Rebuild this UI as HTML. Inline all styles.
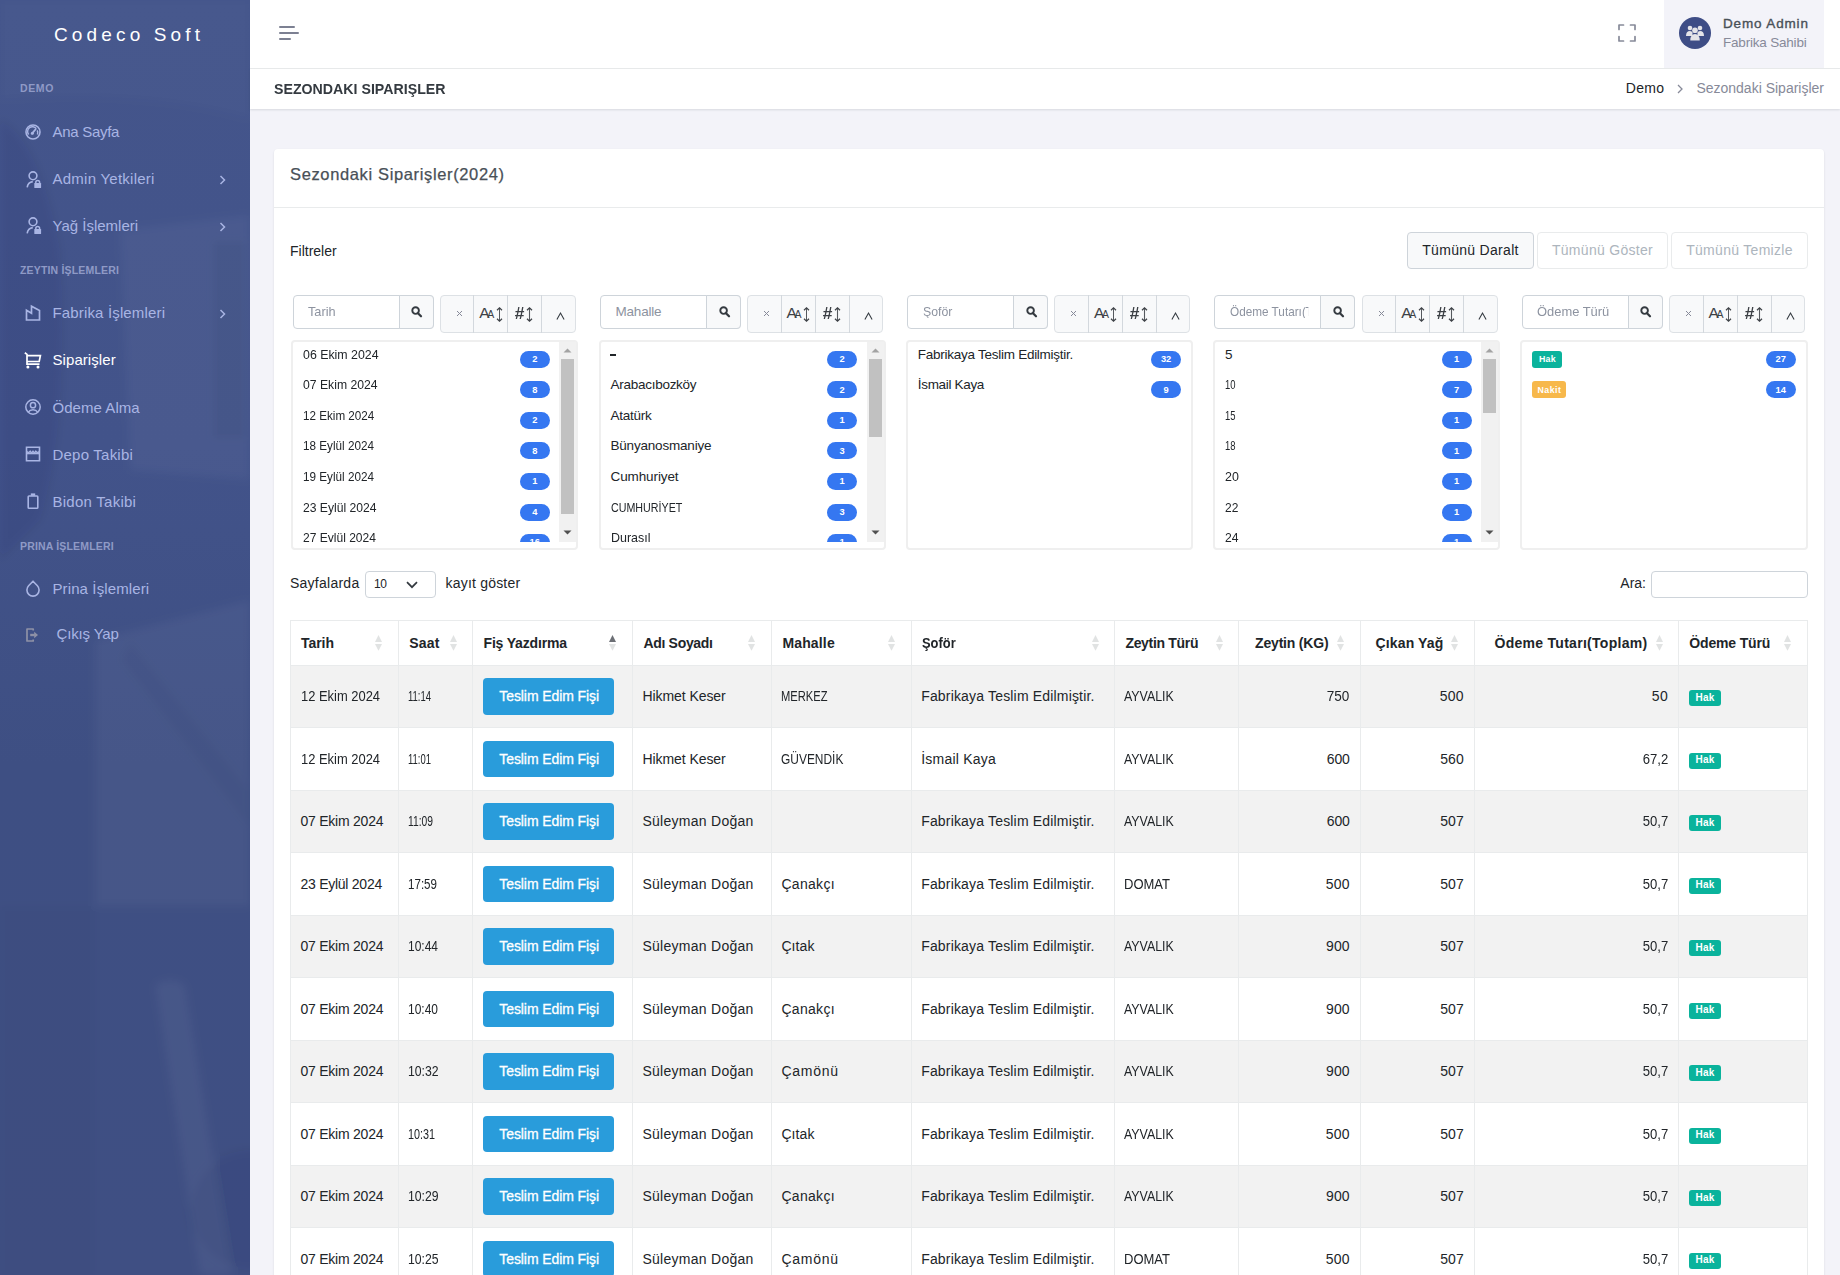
<!DOCTYPE html><html><head><meta charset="utf-8"><title>Sezondaki Siparişler</title><style>
*{box-sizing:border-box;margin:0;padding:0}
html,body{width:1840px;height:1275px;overflow:hidden;background:#f3f3f9;font-family:"Liberation Sans",sans-serif}
.t{position:absolute;white-space:nowrap}
.r{position:absolute}
svg{position:absolute;overflow:visible}
</style></head><body><div class="r" style="left:0px;top:0px;width:250px;height:1275px;background:linear-gradient(180deg,#44558b 0%,#42538a 35%,#3e4f83 60%,#3f4f83 100%);"></div>
<svg style="left:0;top:0;overflow:hidden" width="250" height="1275" viewBox="0 0 250 1275"><defs><filter id="bl" x="-10%" y="-10%" width="120%" height="120%"><feGaussianBlur stdDeviation="4"/></filter></defs><g filter="url(#bl)">
<path d="M0 120Q40 140 60 250Q70 420 40 520L0 560Z" fill="rgba(20,30,70,0.07)"/>
<path d="M120 230L250 215V480L130 470Z" fill="rgba(255,255,255,0.035)"/>
<path d="M212 240H246V440H212Z" fill="rgba(20,30,70,0.06)"/>
<path d="M95 640L250 600V906L95 906Z" fill="rgba(255,255,255,0.04)"/>
<path d="M130 640L250 790V830L120 660Z" fill="rgba(20,30,70,0.05)"/>
<path d="M0 906H95V1275H0Z" fill="rgba(20,30,70,0.02)"/>
<path d="M155 985Q170 975 185 985L232 1275H200Z" fill="rgba(255,255,255,0.045)"/>
<circle cx="250" cy="1210" r="60" fill="rgba(20,30,70,0.06)"/>
<path d="M0 0H250V120Q150 90 0 100Z" fill="rgba(255,255,255,0.015)"/></g>
</svg>
<div class="t " style="top:25.17px;font-size:19px;line-height:19px;color:#ffffff;letter-spacing:4.145px;left:54px;">Codeco Soft</div>
<div class="t " style="top:83.11px;font-size:10.5px;line-height:10.5px;color:#8f9ac6;font-weight:700;letter-spacing:0.6px;left:20px;">DEMO</div>
<div class="t " style="top:265.11px;font-size:10.5px;line-height:10.5px;color:#8f9ac6;font-weight:700;letter-spacing:0.17px;left:20px;">ZEYTIN İŞLEMLERI</div>
<div class="t " style="top:540.91px;font-size:10.5px;line-height:10.5px;color:#8f9ac6;font-weight:700;letter-spacing:0.17px;left:20px;">PRINA İŞLEMLERI</div>
<div class="t " style="top:124.20px;font-size:15px;line-height:15px;color:#a9b5e4;letter-spacing:-0.287px;left:52.5px;">Ana Sayfa</div>
<svg style="left:25px;top:124.0px" width="16" height="16" viewBox="0 0 16 16"><circle cx="8" cy="8" r="7" fill="none" stroke="#a9b5e4" stroke-width="1.6"/><path d="M3.6 10.5A4.7 4.7 0 0 1 11.3 4.6" fill="none" stroke="#a9b5e4" stroke-width="1.4"/><path d="M12.2 6.4A4.7 4.7 0 0 1 12.4 10.5" fill="none" stroke="#a9b5e4" stroke-width="1.4"/><path d="M7 9.6L10.6 5.2" stroke="#a9b5e4" stroke-width="1.8" stroke-linecap="round"/><circle cx="7.4" cy="9.2" r="1.5" fill="#a9b5e4"/></svg>
<div class="t " style="top:171.05px;font-size:15px;line-height:15px;color:#a9b5e4;letter-spacing:0.25px;left:52.5px;">Admin Yetkileri</div>
<svg style="left:26px;top:170.55px" width="16" height="17" viewBox="0 0 16 17"><circle cx="7" cy="4.8" r="3.9" fill="none" stroke="#a9b5e4" stroke-width="1.6"/><path d="M1.2 16.3A6.5 6.5 0 0 1 6.8 10.6" fill="none" stroke="#a9b5e4" stroke-width="1.6"/><rect x="8.3" y="12" width="6.8" height="5" rx="0.6" fill="#a9b5e4"/><path d="M9.8 12.3V11.3A1.9 1.9 0 0 1 13.6 11.3V12.3" fill="none" stroke="#a9b5e4" stroke-width="1.5"/></svg>
<svg style="left:219px;top:174.75px" width="8" height="10" viewBox="0 0 8 10"><path d="M1.5 1L5.5 5L1.5 9" fill="none" stroke="#a9b5e4" stroke-width="1.5"/></svg>
<div class="t " style="top:217.90px;font-size:15px;line-height:15px;color:#a9b5e4;left:52.5px;">Yağ İşlemleri</div>
<svg style="left:26px;top:217.4px" width="16" height="17" viewBox="0 0 16 17"><circle cx="7" cy="4.8" r="3.9" fill="none" stroke="#a9b5e4" stroke-width="1.6"/><path d="M1.2 16.3A6.5 6.5 0 0 1 6.8 10.6" fill="none" stroke="#a9b5e4" stroke-width="1.6"/><rect x="8.3" y="12" width="6.8" height="5" rx="0.6" fill="#a9b5e4"/><path d="M9.8 12.3V11.3A1.9 1.9 0 0 1 13.6 11.3V12.3" fill="none" stroke="#a9b5e4" stroke-width="1.5"/></svg>
<svg style="left:219px;top:221.6px" width="8" height="10" viewBox="0 0 8 10"><path d="M1.5 1L5.5 5L1.5 9" fill="none" stroke="#a9b5e4" stroke-width="1.5"/></svg>
<div class="t " style="top:304.80px;font-size:15px;line-height:15px;color:#a9b5e4;letter-spacing:0.153px;left:52.5px;">Fabrika İşlemleri</div>
<svg style="left:25px;top:304.5px" width="16" height="16" viewBox="0 0 16 16"><path d="M1.5 15V5.2L6.5 8.2V1.2L14.5 5.4V15Z" fill="none" stroke="#a9b5e4" stroke-width="1.7" stroke-linejoin="miter"/></svg>
<svg style="left:219px;top:308.5px" width="8" height="10" viewBox="0 0 8 10"><path d="M1.5 1L5.5 5L1.5 9" fill="none" stroke="#a9b5e4" stroke-width="1.5"/></svg>
<div class="t " style="top:352.30px;font-size:15px;line-height:15px;color:#ffffff;letter-spacing:0.067px;left:52.5px;">Siparişler</div>
<svg style="left:24px;top:352.4px" width="18" height="17" viewBox="0 0 18 17"><path d="M0.8 0.8L3 2.4V12.2H15.5" fill="none" stroke="#ffffff" stroke-width="1.7"/><path d="M3 3.6H16.4L15.2 9.5H3" fill="none" stroke="#ffffff" stroke-width="1.7"/><circle cx="3.9" cy="15" r="1.5" fill="#ffffff"/><circle cx="14" cy="15" r="1.5" fill="#ffffff"/></svg>
<div class="t " style="top:399.70px;font-size:15px;line-height:15px;color:#a9b5e4;letter-spacing:0.056px;left:52.5px;">Ödeme Alma</div>
<svg style="left:25px;top:399.0px" width="16" height="16" viewBox="0 0 16 16"><circle cx="8" cy="8" r="7.2" fill="none" stroke="#a9b5e4" stroke-width="1.5"/><circle cx="8" cy="6.2" r="2.6" fill="none" stroke="#a9b5e4" stroke-width="1.5"/><path d="M3.3 13.2A5.6 5.6 0 0 1 12.7 13.2" fill="none" stroke="#a9b5e4" stroke-width="1.5"/></svg>
<div class="t " style="top:446.70px;font-size:15px;line-height:15px;color:#a9b5e4;letter-spacing:0.22px;left:52.5px;">Depo Takibi</div>
<svg style="left:25px;top:445.9px" width="16" height="16" viewBox="0 0 16 16"><path d="M1.5 1.2H14.5V14.8H1.5Z" fill="none" stroke="#a9b5e4" stroke-width="1.6"/><path d="M1.5 7.5H14.5" stroke="#a9b5e4" stroke-width="1.6"/><path d="M1.5 5.3Q3.3 7.6 5.2 5.3Q6.6 7.6 8 5.3Q9.4 7.6 10.8 5.3Q12.7 7.6 14.5 5.3" fill="none" stroke="#a9b5e4" stroke-width="1.4"/></svg>
<div class="t " style="top:493.80px;font-size:15px;line-height:15px;color:#a9b5e4;letter-spacing:0.255px;left:52.5px;">Bidon Takibi</div>
<svg style="left:27px;top:492.6px" width="12" height="16" viewBox="0 0 12 16"><rect x="1.2" y="3" width="9.6" height="12.2" rx="0.8" fill="none" stroke="#a9b5e4" stroke-width="1.6"/><rect x="3.8" y="0.4" width="4.4" height="2.4" fill="#a9b5e4"/></svg>
<div class="t " style="top:581.00px;font-size:15px;line-height:15px;color:#a9b5e4;letter-spacing:0.111px;left:52.5px;">Prina İşlemleri</div>
<svg style="left:25px;top:579.6px" width="16" height="17" viewBox="0 0 16 17"><path d="M8 1.2L12.4 5.8A6.1 6.1 0 1 1 3.6 5.8Z" fill="none" stroke="#a9b5e4" stroke-width="1.6" stroke-linejoin="round"/></svg>
<div class="t " style="top:626.30px;font-size:15px;line-height:15px;color:#a9b5e4;letter-spacing:-0.156px;left:56.5px;">Çıkış Yap</div>
<svg style="left:26px;top:628px" width="13" height="14" viewBox="0 0 13 14"><path d="M7.2 2.6V1H1V13H7.2V11.4" fill="none" stroke="#8e91a6" stroke-width="1.7" stroke-linejoin="round"/><path d="M4.2 7H8.8" stroke="#8e91a6" stroke-width="2.4"/><path d="M8.2 3.8L12 7L8.2 10.2Z" fill="#8e91a6"/></svg>
<div class="r" style="left:250px;top:0px;width:1590px;height:68px;background:#fff;"></div>
<div class="r" style="left:250px;top:68px;width:1590px;height:1px;background:#e9ebec;"></div>
<div class="r" style="left:279px;top:26px;width:16px;height:2px;background:#7c8092;border-radius:1px;"></div>
<div class="r" style="left:279px;top:32px;width:20px;height:2px;background:#7c8092;border-radius:1px;"></div>
<div class="r" style="left:279px;top:38px;width:12px;height:2px;background:#7c8092;border-radius:1px;"></div>
<svg style="left:1618px;top:23.8px" width="18" height="18" viewBox="0 0 18 18"><path d="M1 5.5V1H5.5M12.5 1H17V5.5M17 12.5V17H12.5M5.5 17H1V12.5" fill="none" stroke="#878a99" stroke-width="1.7" stroke-linejoin="round" stroke-linecap="round"/></svg>
<div class="r" style="left:1664px;top:0px;width:160px;height:68px;background:#f3f3f9;"></div>
<div class="r" style="left:1679px;top:17px;width:32px;height:32px;border-radius:50%;background:#3e4d86;"></div>
<svg style="left:1685px;top:24px" width="20" height="18" viewBox="0 0 20 18"><circle cx="5" cy="4" r="2.3" fill="#e4e4e8"/><circle cx="15" cy="4" r="2.3" fill="#e4e4e8"/><path d="M1 12Q1 7 5 7Q7 7 7.5 8.5V12Z" fill="#e4e4e8"/><path d="M19 12Q19 7 15 7Q13 7 12.5 8.5V12Z" fill="#e4e4e8"/><circle cx="10" cy="6.2" r="2.8" fill="#e4e4e8"/><path d="M5.3 16.5Q5.3 10 10 10Q14.7 10 14.7 16.5Z" fill="#e4e4e8"/></svg>
<div class="t " style="top:16.57px;font-size:13.5px;line-height:13.5px;color:#495057;letter-spacing:0.856px;left:1723px;-webkit-text-stroke:0.35px #495057;">Demo Admin</div>
<div class="t " style="top:35.57px;font-size:13.5px;line-height:13.5px;color:#878a99;letter-spacing:-0.2px;left:1723px;">Fabrika Sahibi</div>
<div class="r" style="left:250px;top:69px;width:1590px;height:40px;background:#fff;box-shadow:0 1px 2px rgba(56,65,74,0.15);"></div>
<div class="t " style="top:81.30px;font-size:15px;line-height:15px;color:#343a40;font-weight:700;transform:scaleX(0.9454);transform-origin:left center;left:274px;">SEZONDAKI SIPARIŞLER</div>
<div class="t " style="top:81.35px;font-size:14px;line-height:14px;color:#878a99;right:16px;">Sezondaki Siparişler</div>
<svg style="left:1677px;top:84px" width="7" height="10" viewBox="0 0 7 10"><path d="M1 1L5 5L1 9" fill="none" stroke="#878a99" stroke-width="1.3"/></svg>
<div class="t " style="top:81.35px;font-size:14px;line-height:14px;color:#212529;letter-spacing:0.3px;right:175.70000000000005px;">Demo</div>
<div class="r" style="left:274px;top:149px;width:1550px;height:1200px;background:#fff;border-radius:4px;box-shadow:0 1px 2px rgba(56,65,74,0.15);"></div>
<div class="t " style="top:166.33px;font-size:16.5px;line-height:16.5px;color:#495057;letter-spacing:0.636px;left:290px;-webkit-text-stroke:0.25px #495057;">Sezondaki Siparişler(2024)</div>
<div class="r" style="left:274px;top:207px;width:1550px;height:1px;background:#e9ebec;"></div>
<div class="t " style="top:244.35px;font-size:14px;line-height:14px;color:#212529;left:290px;">Filtreler</div>
<div class="r" style="left:1407px;top:232px;width:127px;height:37px;background:#f8f9fa;border:1px solid #ced4da;border-radius:4px;"></div>
<div class="t " style="top:243.25px;font-size:14px;line-height:14px;color:#212529;letter-spacing:0.3px;left:1170.5px;width:600px;text-align:center;">Tümünü Daralt</div>
<div class="r" style="left:1537px;top:232px;width:131px;height:37px;background:#fff;border:1px solid #e9ebec;border-radius:4px;"></div>
<div class="t " style="top:243.25px;font-size:14px;line-height:14px;color:#adb5bd;letter-spacing:0.3px;left:1302.5px;width:600px;text-align:center;">Tümünü Göster</div>
<div class="r" style="left:1671px;top:232px;width:137px;height:37px;background:#fff;border:1px solid #e9ebec;border-radius:4px;"></div>
<div class="t " style="top:243.25px;font-size:14px;line-height:14px;color:#adb5bd;letter-spacing:0.3px;left:1439.5px;width:600px;text-align:center;">Tümünü Temizle</div>
<div class="r" style="left:292.5px;top:295px;width:141px;height:34px;background:#fff;border:1px solid #ced4da;border-radius:4px;"></div>
<div class="r" style="left:398.5px;top:295px;width:35px;height:34px;background:#f8f9fa;border:1px solid #ced4da;border-radius:0 4px 4px 0;"></div>
<div class="t" style="left:308.2px;top:304.87px;font-size:13.5px;line-height:13.5px;color:#8d93a0;width:90px;overflow:hidden;transform:scaleX(0.9436);transform-origin:left center;">Tarih</div>
<svg style="left:411.2px;top:306px" width="11" height="12" viewBox="0 0 11 12"><circle cx="4.6" cy="4.6" r="3.3" fill="none" stroke="#343a40" stroke-width="1.9"/><path d="M7 7.2L10 10.3" stroke="#343a40" stroke-width="2.2" stroke-linecap="round"/></svg>
<div class="r" style="left:439.8px;top:295px;width:136px;height:38px;background:#f8f9fa;border:1px solid #dde1e5;border-radius:4px;"></div>
<div class="r" style="left:473.3px;top:295px;width:1px;height:38px;background:#d3d8dd;"></div>
<div class="r" style="left:507.3px;top:295px;width:1px;height:38px;background:#d3d8dd;"></div>
<div class="r" style="left:541.3px;top:295px;width:1px;height:38px;background:#d3d8dd;"></div>
<svg style="left:455.8px;top:310px" width="7" height="7" viewBox="0 0 7 7"><path d="M1 1L6 6M6 1L1 6" stroke="#878a99" stroke-width="1"/></svg>
<div class="t " style="top:304.68px;font-size:15.5px;line-height:15.5px;color:#3d4146;letter-spacing:-1.5px;left:479.3px;">A</div>
<div class="t " style="top:308.91px;font-size:10.5px;line-height:10.5px;color:#3d4146;left:487.3px;">A</div>
<svg style="left:495.8px;top:306.5px" width="7" height="15" viewBox="0 0 7 15"><path d="M3.5 1V14" stroke="#55595e" stroke-width="1"/><path d="M1 3.2L3.5 0.8L6 3.2M1 11.8L3.5 14.2L6 11.8" fill="none" stroke="#3d4146" stroke-width="1.2"/></svg>
<div class="t " style="top:304.63px;font-size:16.5px;line-height:16.5px;color:#3d4146;font-weight:700;left:515.3px;transform:scaleX(1.05);">#</div>
<svg style="left:526.3px;top:307px" width="7" height="15" viewBox="0 0 7 15"><path d="M3.5 1V14" stroke="#55595e" stroke-width="1.1"/><path d="M1 3.2L3.5 0.8L6 3.2M1 11.8L3.5 14.2L6 11.8" fill="none" stroke="#3d4146" stroke-width="1.3"/></svg>
<svg style="left:556.3px;top:311.5px" width="9" height="8" viewBox="0 0 9 8"><path d="M0.9 7.4L4.5 1L8.1 7.4" fill="none" stroke="#343a40" stroke-width="1.1"/></svg>
<div class="r" style="left:291.2px;top:340px;width:287.3px;height:210px;background:#fff;border:2px solid #efefef;border-radius:4px;"></div>
<div class="r" style="left:293.20px;top:342px;width:283.30px;height:200px;overflow:hidden;">
<div class="t" style="left:10px;top:5.77px;font-size:13.5px;line-height:13.5px;color:#212529;transform:scaleX(0.9158);transform-origin:left center;">06 Ekim 2024</div>
<div class="r" style="left:226.60px;top:8.80px;width:30px;height:17px;background:#3577f1;border-radius:9px;"></div>
<div class="t" style="left:226.60px;width:30px;text-align:center;top:13.10px;font-size:9.3px;line-height:9.3px;color:#fff;font-weight:700;">2</div>
<div class="t" style="left:10px;top:36.32px;font-size:13.5px;line-height:13.5px;color:#212529;transform:scaleX(0.9037);transform-origin:left center;">07 Ekim 2024</div>
<div class="r" style="left:226.60px;top:39.35px;width:30px;height:17px;background:#3577f1;border-radius:9px;"></div>
<div class="t" style="left:226.60px;width:30px;text-align:center;top:43.65px;font-size:9.3px;line-height:9.3px;color:#fff;font-weight:700;">8</div>
<div class="t" style="left:10px;top:66.87px;font-size:13.5px;line-height:13.5px;color:#212529;transform:scaleX(0.8637);transform-origin:left center;">12 Ekim 2024</div>
<div class="r" style="left:226.60px;top:69.90px;width:30px;height:17px;background:#3577f1;border-radius:9px;"></div>
<div class="t" style="left:226.60px;width:30px;text-align:center;top:74.20px;font-size:9.3px;line-height:9.3px;color:#fff;font-weight:700;">2</div>
<div class="t" style="left:10px;top:97.42px;font-size:13.5px;line-height:13.5px;color:#212529;transform:scaleX(0.8667);transform-origin:left center;">18 Eylül 2024</div>
<div class="r" style="left:226.60px;top:100.45px;width:30px;height:17px;background:#3577f1;border-radius:9px;"></div>
<div class="t" style="left:226.60px;width:30px;text-align:center;top:104.75px;font-size:9.3px;line-height:9.3px;color:#fff;font-weight:700;">8</div>
<div class="t" style="left:10px;top:127.97px;font-size:13.5px;line-height:13.5px;color:#212529;transform:scaleX(0.8667);transform-origin:left center;">19 Eylül 2024</div>
<div class="r" style="left:226.60px;top:131.00px;width:30px;height:17px;background:#3577f1;border-radius:9px;"></div>
<div class="t" style="left:226.60px;width:30px;text-align:center;top:135.30px;font-size:9.3px;line-height:9.3px;color:#fff;font-weight:700;">1</div>
<div class="t" style="left:10px;top:158.52px;font-size:13.5px;line-height:13.5px;color:#212529;transform:scaleX(0.8985);transform-origin:left center;">23 Eylül 2024</div>
<div class="r" style="left:226.60px;top:161.55px;width:30px;height:17px;background:#3577f1;border-radius:9px;"></div>
<div class="t" style="left:226.60px;width:30px;text-align:center;top:165.85px;font-size:9.3px;line-height:9.3px;color:#fff;font-weight:700;">4</div>
<div class="t" style="left:10px;top:189.07px;font-size:13.5px;line-height:13.5px;color:#212529;transform:scaleX(0.8912);transform-origin:left center;">27 Eylül 2024</div>
<div class="r" style="left:226.60px;top:192.10px;width:30px;height:17px;background:#3577f1;border-radius:9px;"></div>
<div class="t" style="left:226.60px;width:30px;text-align:center;top:196.40px;font-size:9.3px;line-height:9.3px;color:#fff;font-weight:700;">16</div>
<div class="r" style="left:266.30px;top:0;width:17px;height:200px;background:#f1f1f1;"></div>
<div class="r" style="left:268.30px;top:17px;width:13px;height:155px;background:#c1c1c1;"></div>
<svg style="left:270.30px;top:6px" width="9" height="5" viewBox="0 0 9 5"><path d="M0.5 4.5L4.5 0.5L8.5 4.5Z" fill="#a3a3a3"/></svg>
<svg style="left:270.30px;top:188px" width="9" height="5" viewBox="0 0 9 5"><path d="M0.5 0.5L4.5 4.5L8.5 0.5Z" fill="#505050"/></svg>
</div>
<div class="r" style="left:599.8px;top:295px;width:141px;height:34px;background:#fff;border:1px solid #ced4da;border-radius:4px;"></div>
<div class="r" style="left:705.8px;top:295px;width:35px;height:34px;background:#f8f9fa;border:1px solid #ced4da;border-radius:0 4px 4px 0;"></div>
<div class="t" style="left:615.5px;top:304.87px;font-size:13.5px;line-height:13.5px;color:#8d93a0;width:90px;overflow:hidden;letter-spacing:-0.2px;">Mahalle</div>
<svg style="left:718.5px;top:306px" width="11" height="12" viewBox="0 0 11 12"><circle cx="4.6" cy="4.6" r="3.3" fill="none" stroke="#343a40" stroke-width="1.9"/><path d="M7 7.2L10 10.3" stroke="#343a40" stroke-width="2.2" stroke-linecap="round"/></svg>
<div class="r" style="left:747.1px;top:295px;width:136px;height:38px;background:#f8f9fa;border:1px solid #dde1e5;border-radius:4px;"></div>
<div class="r" style="left:780.6px;top:295px;width:1px;height:38px;background:#d3d8dd;"></div>
<div class="r" style="left:814.6px;top:295px;width:1px;height:38px;background:#d3d8dd;"></div>
<div class="r" style="left:848.6px;top:295px;width:1px;height:38px;background:#d3d8dd;"></div>
<svg style="left:763.1px;top:310px" width="7" height="7" viewBox="0 0 7 7"><path d="M1 1L6 6M6 1L1 6" stroke="#878a99" stroke-width="1"/></svg>
<div class="t " style="top:304.68px;font-size:15.5px;line-height:15.5px;color:#3d4146;letter-spacing:-1.5px;left:786.6px;">A</div>
<div class="t " style="top:308.91px;font-size:10.5px;line-height:10.5px;color:#3d4146;left:794.6px;">A</div>
<svg style="left:803.1px;top:306.5px" width="7" height="15" viewBox="0 0 7 15"><path d="M3.5 1V14" stroke="#55595e" stroke-width="1"/><path d="M1 3.2L3.5 0.8L6 3.2M1 11.8L3.5 14.2L6 11.8" fill="none" stroke="#3d4146" stroke-width="1.2"/></svg>
<div class="t " style="top:304.63px;font-size:16.5px;line-height:16.5px;color:#3d4146;font-weight:700;left:822.6px;transform:scaleX(1.05);">#</div>
<svg style="left:833.6px;top:307px" width="7" height="15" viewBox="0 0 7 15"><path d="M3.5 1V14" stroke="#55595e" stroke-width="1.1"/><path d="M1 3.2L3.5 0.8L6 3.2M1 11.8L3.5 14.2L6 11.8" fill="none" stroke="#3d4146" stroke-width="1.3"/></svg>
<svg style="left:863.6px;top:311.5px" width="9" height="8" viewBox="0 0 9 8"><path d="M0.9 7.4L4.5 1L8.1 7.4" fill="none" stroke="#343a40" stroke-width="1.1"/></svg>
<div class="r" style="left:598.5px;top:340px;width:287.3px;height:210px;background:#fff;border:2px solid #efefef;border-radius:4px;"></div>
<div class="r" style="left:600.50px;top:342px;width:283.30px;height:200px;overflow:hidden;">
<div class="r" style="left:9.70px;top:12.20px;width:6px;height:2px;background:#212529;"></div>
<div class="r" style="left:226.60px;top:8.80px;width:30px;height:17px;background:#3577f1;border-radius:9px;"></div>
<div class="t" style="left:226.60px;width:30px;text-align:center;top:13.10px;font-size:9.3px;line-height:9.3px;color:#fff;font-weight:700;">2</div>
<div class="t" style="left:10px;top:36.32px;font-size:13.5px;line-height:13.5px;color:#212529;letter-spacing:-0.267px;">Arabacıbozköy</div>
<div class="r" style="left:226.60px;top:39.35px;width:30px;height:17px;background:#3577f1;border-radius:9px;"></div>
<div class="t" style="left:226.60px;width:30px;text-align:center;top:43.65px;font-size:9.3px;line-height:9.3px;color:#fff;font-weight:700;">2</div>
<div class="t" style="left:10px;top:66.87px;font-size:13.5px;line-height:13.5px;color:#212529;letter-spacing:-0.25px;">Atatürk</div>
<div class="r" style="left:226.60px;top:69.90px;width:30px;height:17px;background:#3577f1;border-radius:9px;"></div>
<div class="t" style="left:226.60px;width:30px;text-align:center;top:74.20px;font-size:9.3px;line-height:9.3px;color:#fff;font-weight:700;">1</div>
<div class="t" style="left:10px;top:97.42px;font-size:13.5px;line-height:13.5px;color:#212529;letter-spacing:-0.196px;">Bünyanosmaniye</div>
<div class="r" style="left:226.60px;top:100.45px;width:30px;height:17px;background:#3577f1;border-radius:9px;"></div>
<div class="t" style="left:226.60px;width:30px;text-align:center;top:104.75px;font-size:9.3px;line-height:9.3px;color:#fff;font-weight:700;">3</div>
<div class="t" style="left:10px;top:127.97px;font-size:13.5px;line-height:13.5px;color:#212529;letter-spacing:-0.1px;">Cumhuriyet</div>
<div class="r" style="left:226.60px;top:131.00px;width:30px;height:17px;background:#3577f1;border-radius:9px;"></div>
<div class="t" style="left:226.60px;width:30px;text-align:center;top:135.30px;font-size:9.3px;line-height:9.3px;color:#fff;font-weight:700;">1</div>
<div class="t" style="left:10px;top:158.52px;font-size:13.5px;line-height:13.5px;color:#212529;transform:scaleX(0.7922);transform-origin:left center;">CUMHURİYET</div>
<div class="r" style="left:226.60px;top:161.55px;width:30px;height:17px;background:#3577f1;border-radius:9px;"></div>
<div class="t" style="left:226.60px;width:30px;text-align:center;top:165.85px;font-size:9.3px;line-height:9.3px;color:#fff;font-weight:700;">3</div>
<div class="t" style="left:10px;top:189.07px;font-size:13.5px;line-height:13.5px;color:#212529;transform:scaleX(0.9240);transform-origin:left center;">Durasıl</div>
<div class="r" style="left:226.60px;top:192.10px;width:30px;height:17px;background:#3577f1;border-radius:9px;"></div>
<div class="t" style="left:226.60px;width:30px;text-align:center;top:196.40px;font-size:9.3px;line-height:9.3px;color:#fff;font-weight:700;">1</div>
<div class="r" style="left:266.30px;top:0;width:17px;height:200px;background:#f1f1f1;"></div>
<div class="r" style="left:268.30px;top:17px;width:13px;height:78px;background:#c1c1c1;"></div>
<svg style="left:270.30px;top:6px" width="9" height="5" viewBox="0 0 9 5"><path d="M0.5 4.5L4.5 0.5L8.5 4.5Z" fill="#a3a3a3"/></svg>
<svg style="left:270.30px;top:188px" width="9" height="5" viewBox="0 0 9 5"><path d="M0.5 0.5L4.5 4.5L8.5 0.5Z" fill="#505050"/></svg>
</div>
<div class="r" style="left:907.1px;top:295px;width:141px;height:34px;background:#fff;border:1px solid #ced4da;border-radius:4px;"></div>
<div class="r" style="left:1013.1px;top:295px;width:35px;height:34px;background:#f8f9fa;border:1px solid #ced4da;border-radius:0 4px 4px 0;"></div>
<div class="t" style="left:922.8px;top:304.87px;font-size:13.5px;line-height:13.5px;color:#8d93a0;width:90px;overflow:hidden;transform:scaleX(0.9116);transform-origin:left center;">Şoför</div>
<svg style="left:1025.8px;top:306px" width="11" height="12" viewBox="0 0 11 12"><circle cx="4.6" cy="4.6" r="3.3" fill="none" stroke="#343a40" stroke-width="1.9"/><path d="M7 7.2L10 10.3" stroke="#343a40" stroke-width="2.2" stroke-linecap="round"/></svg>
<div class="r" style="left:1054.4px;top:295px;width:136px;height:38px;background:#f8f9fa;border:1px solid #dde1e5;border-radius:4px;"></div>
<div class="r" style="left:1087.9px;top:295px;width:1px;height:38px;background:#d3d8dd;"></div>
<div class="r" style="left:1121.9px;top:295px;width:1px;height:38px;background:#d3d8dd;"></div>
<div class="r" style="left:1155.9px;top:295px;width:1px;height:38px;background:#d3d8dd;"></div>
<svg style="left:1070.4px;top:310px" width="7" height="7" viewBox="0 0 7 7"><path d="M1 1L6 6M6 1L1 6" stroke="#878a99" stroke-width="1"/></svg>
<div class="t " style="top:304.68px;font-size:15.5px;line-height:15.5px;color:#3d4146;letter-spacing:-1.5px;left:1093.9px;">A</div>
<div class="t " style="top:308.91px;font-size:10.5px;line-height:10.5px;color:#3d4146;left:1101.9px;">A</div>
<svg style="left:1110.4px;top:306.5px" width="7" height="15" viewBox="0 0 7 15"><path d="M3.5 1V14" stroke="#55595e" stroke-width="1"/><path d="M1 3.2L3.5 0.8L6 3.2M1 11.8L3.5 14.2L6 11.8" fill="none" stroke="#3d4146" stroke-width="1.2"/></svg>
<div class="t " style="top:304.63px;font-size:16.5px;line-height:16.5px;color:#3d4146;font-weight:700;left:1129.9px;transform:scaleX(1.05);">#</div>
<svg style="left:1140.9px;top:307px" width="7" height="15" viewBox="0 0 7 15"><path d="M3.5 1V14" stroke="#55595e" stroke-width="1.1"/><path d="M1 3.2L3.5 0.8L6 3.2M1 11.8L3.5 14.2L6 11.8" fill="none" stroke="#3d4146" stroke-width="1.3"/></svg>
<svg style="left:1170.9px;top:311.5px" width="9" height="8" viewBox="0 0 9 8"><path d="M0.9 7.4L4.5 1L8.1 7.4" fill="none" stroke="#343a40" stroke-width="1.1"/></svg>
<div class="r" style="left:905.8px;top:340px;width:287.3px;height:210px;background:#fff;border:2px solid #efefef;border-radius:4px;"></div>
<div class="r" style="left:907.80px;top:342px;width:283.30px;height:200px;overflow:hidden;">
<div class="t" style="left:10px;top:5.77px;font-size:13.5px;line-height:13.5px;color:#212529;letter-spacing:-0.261px;">Fabrikaya Teslim Edilmiştir.</div>
<div class="r" style="left:243.30px;top:8.80px;width:30px;height:17px;background:#3577f1;border-radius:9px;"></div>
<div class="t" style="left:243.30px;width:30px;text-align:center;top:13.10px;font-size:9.3px;line-height:9.3px;color:#fff;font-weight:700;">32</div>
<div class="t" style="left:10px;top:36.32px;font-size:13.5px;line-height:13.5px;color:#212529;letter-spacing:-0.32px;">İsmail Kaya</div>
<div class="r" style="left:243.30px;top:39.35px;width:30px;height:17px;background:#3577f1;border-radius:9px;"></div>
<div class="t" style="left:243.30px;width:30px;text-align:center;top:43.65px;font-size:9.3px;line-height:9.3px;color:#fff;font-weight:700;">9</div>
</div>
<div class="r" style="left:1214.4px;top:295px;width:141px;height:34px;background:#fff;border:1px solid #ced4da;border-radius:4px;"></div>
<div class="r" style="left:1320.4px;top:295px;width:35px;height:34px;background:#f8f9fa;border:1px solid #ced4da;border-radius:0 4px 4px 0;"></div>
<div class="t" style="left:1230.1000000000001px;top:304.87px;font-size:13.5px;line-height:13.5px;color:#8d93a0;width:90px;overflow:hidden;transform:scaleX(0.8709);transform-origin:left center;">Ödeme Tutarı(T</div>
<svg style="left:1333.1000000000001px;top:306px" width="11" height="12" viewBox="0 0 11 12"><circle cx="4.6" cy="4.6" r="3.3" fill="none" stroke="#343a40" stroke-width="1.9"/><path d="M7 7.2L10 10.3" stroke="#343a40" stroke-width="2.2" stroke-linecap="round"/></svg>
<div class="r" style="left:1361.7px;top:295px;width:136px;height:38px;background:#f8f9fa;border:1px solid #dde1e5;border-radius:4px;"></div>
<div class="r" style="left:1395.2px;top:295px;width:1px;height:38px;background:#d3d8dd;"></div>
<div class="r" style="left:1429.2px;top:295px;width:1px;height:38px;background:#d3d8dd;"></div>
<div class="r" style="left:1463.2px;top:295px;width:1px;height:38px;background:#d3d8dd;"></div>
<svg style="left:1377.7px;top:310px" width="7" height="7" viewBox="0 0 7 7"><path d="M1 1L6 6M6 1L1 6" stroke="#878a99" stroke-width="1"/></svg>
<div class="t " style="top:304.68px;font-size:15.5px;line-height:15.5px;color:#3d4146;letter-spacing:-1.5px;left:1401.2px;">A</div>
<div class="t " style="top:308.91px;font-size:10.5px;line-height:10.5px;color:#3d4146;left:1409.2px;">A</div>
<svg style="left:1417.7px;top:306.5px" width="7" height="15" viewBox="0 0 7 15"><path d="M3.5 1V14" stroke="#55595e" stroke-width="1"/><path d="M1 3.2L3.5 0.8L6 3.2M1 11.8L3.5 14.2L6 11.8" fill="none" stroke="#3d4146" stroke-width="1.2"/></svg>
<div class="t " style="top:304.63px;font-size:16.5px;line-height:16.5px;color:#3d4146;font-weight:700;left:1437.2px;transform:scaleX(1.05);">#</div>
<svg style="left:1448.2px;top:307px" width="7" height="15" viewBox="0 0 7 15"><path d="M3.5 1V14" stroke="#55595e" stroke-width="1.1"/><path d="M1 3.2L3.5 0.8L6 3.2M1 11.8L3.5 14.2L6 11.8" fill="none" stroke="#3d4146" stroke-width="1.3"/></svg>
<svg style="left:1478.2px;top:311.5px" width="9" height="8" viewBox="0 0 9 8"><path d="M0.9 7.4L4.5 1L8.1 7.4" fill="none" stroke="#343a40" stroke-width="1.1"/></svg>
<div class="r" style="left:1213.1px;top:340px;width:287.3px;height:210px;background:#fff;border:2px solid #efefef;border-radius:4px;"></div>
<div class="r" style="left:1215.10px;top:342px;width:283.30px;height:200px;overflow:hidden;">
<div class="t" style="left:10px;top:5.77px;font-size:13.5px;line-height:13.5px;color:#212529;">5</div>
<div class="r" style="left:226.60px;top:8.80px;width:30px;height:17px;background:#3577f1;border-radius:9px;"></div>
<div class="t" style="left:226.60px;width:30px;text-align:center;top:13.10px;font-size:9.3px;line-height:9.3px;color:#fff;font-weight:700;">1</div>
<div class="t" style="left:10px;top:36.32px;font-size:13.5px;line-height:13.5px;color:#212529;transform:scaleX(0.7000);transform-origin:left center;">10</div>
<div class="r" style="left:226.60px;top:39.35px;width:30px;height:17px;background:#3577f1;border-radius:9px;"></div>
<div class="t" style="left:226.60px;width:30px;text-align:center;top:43.65px;font-size:9.3px;line-height:9.3px;color:#fff;font-weight:700;">7</div>
<div class="t" style="left:10px;top:66.87px;font-size:13.5px;line-height:13.5px;color:#212529;transform:scaleX(0.7000);transform-origin:left center;">15</div>
<div class="r" style="left:226.60px;top:69.90px;width:30px;height:17px;background:#3577f1;border-radius:9px;"></div>
<div class="t" style="left:226.60px;width:30px;text-align:center;top:74.20px;font-size:9.3px;line-height:9.3px;color:#fff;font-weight:700;">1</div>
<div class="t" style="left:10px;top:97.42px;font-size:13.5px;line-height:13.5px;color:#212529;transform:scaleX(0.7000);transform-origin:left center;">18</div>
<div class="r" style="left:226.60px;top:100.45px;width:30px;height:17px;background:#3577f1;border-radius:9px;"></div>
<div class="t" style="left:226.60px;width:30px;text-align:center;top:104.75px;font-size:9.3px;line-height:9.3px;color:#fff;font-weight:700;">1</div>
<div class="t" style="left:10px;top:127.97px;font-size:13.5px;line-height:13.5px;color:#212529;transform:scaleX(0.9200);transform-origin:left center;">20</div>
<div class="r" style="left:226.60px;top:131.00px;width:30px;height:17px;background:#3577f1;border-radius:9px;"></div>
<div class="t" style="left:226.60px;width:30px;text-align:center;top:135.30px;font-size:9.3px;line-height:9.3px;color:#fff;font-weight:700;">1</div>
<div class="t" style="left:10px;top:158.52px;font-size:13.5px;line-height:13.5px;color:#212529;transform:scaleX(0.8867);transform-origin:left center;">22</div>
<div class="r" style="left:226.60px;top:161.55px;width:30px;height:17px;background:#3577f1;border-radius:9px;"></div>
<div class="t" style="left:226.60px;width:30px;text-align:center;top:165.85px;font-size:9.3px;line-height:9.3px;color:#fff;font-weight:700;">1</div>
<div class="t" style="left:10px;top:189.07px;font-size:13.5px;line-height:13.5px;color:#212529;transform:scaleX(0.9000);transform-origin:left center;">24</div>
<div class="r" style="left:226.60px;top:192.10px;width:30px;height:17px;background:#3577f1;border-radius:9px;"></div>
<div class="t" style="left:226.60px;width:30px;text-align:center;top:196.40px;font-size:9.3px;line-height:9.3px;color:#fff;font-weight:700;">1</div>
<div class="r" style="left:266.30px;top:0;width:17px;height:200px;background:#f1f1f1;"></div>
<div class="r" style="left:268.30px;top:17px;width:13px;height:54px;background:#c1c1c1;"></div>
<svg style="left:270.30px;top:6px" width="9" height="5" viewBox="0 0 9 5"><path d="M0.5 4.5L4.5 0.5L8.5 4.5Z" fill="#a3a3a3"/></svg>
<svg style="left:270.30px;top:188px" width="9" height="5" viewBox="0 0 9 5"><path d="M0.5 0.5L4.5 4.5L8.5 0.5Z" fill="#505050"/></svg>
</div>
<div class="r" style="left:1521.7px;top:295px;width:141px;height:34px;background:#fff;border:1px solid #ced4da;border-radius:4px;"></div>
<div class="r" style="left:1627.7px;top:295px;width:35px;height:34px;background:#f8f9fa;border:1px solid #ced4da;border-radius:0 4px 4px 0;"></div>
<div class="t" style="left:1537.4px;top:304.87px;font-size:13.5px;line-height:13.5px;color:#8d93a0;width:90px;overflow:hidden;transform:scaleX(0.9570);transform-origin:left center;">Ödeme Türü</div>
<svg style="left:1640.4px;top:306px" width="11" height="12" viewBox="0 0 11 12"><circle cx="4.6" cy="4.6" r="3.3" fill="none" stroke="#343a40" stroke-width="1.9"/><path d="M7 7.2L10 10.3" stroke="#343a40" stroke-width="2.2" stroke-linecap="round"/></svg>
<div class="r" style="left:1669.0px;top:295px;width:136px;height:38px;background:#f8f9fa;border:1px solid #dde1e5;border-radius:4px;"></div>
<div class="r" style="left:1702.5px;top:295px;width:1px;height:38px;background:#d3d8dd;"></div>
<div class="r" style="left:1736.5px;top:295px;width:1px;height:38px;background:#d3d8dd;"></div>
<div class="r" style="left:1770.5px;top:295px;width:1px;height:38px;background:#d3d8dd;"></div>
<svg style="left:1685.0px;top:310px" width="7" height="7" viewBox="0 0 7 7"><path d="M1 1L6 6M6 1L1 6" stroke="#878a99" stroke-width="1"/></svg>
<div class="t " style="top:304.68px;font-size:15.5px;line-height:15.5px;color:#3d4146;letter-spacing:-1.5px;left:1708.5px;">A</div>
<div class="t " style="top:308.91px;font-size:10.5px;line-height:10.5px;color:#3d4146;left:1716.5px;">A</div>
<svg style="left:1725.0px;top:306.5px" width="7" height="15" viewBox="0 0 7 15"><path d="M3.5 1V14" stroke="#55595e" stroke-width="1"/><path d="M1 3.2L3.5 0.8L6 3.2M1 11.8L3.5 14.2L6 11.8" fill="none" stroke="#3d4146" stroke-width="1.2"/></svg>
<div class="t " style="top:304.63px;font-size:16.5px;line-height:16.5px;color:#3d4146;font-weight:700;left:1744.5px;transform:scaleX(1.05);">#</div>
<svg style="left:1755.5px;top:307px" width="7" height="15" viewBox="0 0 7 15"><path d="M3.5 1V14" stroke="#55595e" stroke-width="1.1"/><path d="M1 3.2L3.5 0.8L6 3.2M1 11.8L3.5 14.2L6 11.8" fill="none" stroke="#3d4146" stroke-width="1.3"/></svg>
<svg style="left:1785.5px;top:311.5px" width="9" height="8" viewBox="0 0 9 8"><path d="M0.9 7.4L4.5 1L8.1 7.4" fill="none" stroke="#343a40" stroke-width="1.1"/></svg>
<div class="r" style="left:1520.4px;top:340px;width:287.3px;height:210px;background:#fff;border:2px solid #efefef;border-radius:4px;"></div>
<div class="r" style="left:1522.40px;top:342px;width:283.30px;height:200px;overflow:hidden;">
<div class="r" style="left:10px;top:8.80px;width:30px;height:17px;background:#0ab39c;border-radius:3px;"></div>
<div class="t" style="left:10px;width:30px;text-align:center;top:13.40px;font-size:8.8px;line-height:8.8px;color:#fff;font-weight:700;letter-spacing:0.2px;">Hak</div>
<div class="r" style="left:243.30px;top:8.80px;width:30px;height:17px;background:#3577f1;border-radius:9px;"></div>
<div class="t" style="left:243.30px;width:30px;text-align:center;top:13.10px;font-size:9.3px;line-height:9.3px;color:#fff;font-weight:700;">27</div>
<div class="r" style="left:10px;top:39.35px;width:34px;height:17px;background:#f7b84b;border-radius:3px;"></div>
<div class="t" style="left:10px;width:34px;text-align:center;top:43.95px;font-size:8.8px;line-height:8.8px;color:#fff;font-weight:700;letter-spacing:0.45px;">Nakit</div>
<div class="r" style="left:243.30px;top:39.35px;width:30px;height:17px;background:#3577f1;border-radius:9px;"></div>
<div class="t" style="left:243.30px;width:30px;text-align:center;top:43.65px;font-size:9.3px;line-height:9.3px;color:#fff;font-weight:700;">14</div>
</div>
<div class="t " style="top:576.15px;font-size:14px;line-height:14px;color:#212529;letter-spacing:0.25px;left:290px;">Sayfalarda</div>
<div class="r" style="left:365px;top:571px;width:71px;height:27px;background:#fff;border:1px solid #ced4da;border-radius:4px;"></div>
<div class="t " style="top:577.84px;font-size:12px;line-height:12px;color:#212529;letter-spacing:-0.5px;left:374px;">10</div>
<svg style="left:406px;top:581px" width="12" height="8" viewBox="0 0 12 8"><path d="M1 1.2L6 6.2L11 1.2" fill="none" stroke="#343a40" stroke-width="1.7"/></svg>
<div class="t " style="top:576.15px;font-size:14px;line-height:14px;color:#212529;letter-spacing:0.2px;left:445.5px;">kayıt göster</div>
<div class="t " style="top:576.45px;font-size:14px;line-height:14px;color:#212529;right:194px;">Ara:</div>
<div class="r" style="left:1651px;top:571px;width:157px;height:27px;background:#fff;border:1px solid #ced4da;border-radius:4px;"></div>
<div class="r" style="left:290px;top:620px;width:1518px;height:700px;background:#fff;"></div>
<div class="r" style="left:290px;top:665.3px;width:1518px;height:62.5px;background:#f2f2f2;"></div>
<div class="r" style="left:290px;top:790.3px;width:1518px;height:62.5px;background:#f2f2f2;"></div>
<div class="r" style="left:290px;top:915.3px;width:1518px;height:62.5px;background:#f2f2f2;"></div>
<div class="r" style="left:290px;top:1040.3px;width:1518px;height:62.5px;background:#f2f2f2;"></div>
<div class="r" style="left:290px;top:1165.3px;width:1518px;height:62.5px;background:#f2f2f2;"></div>
<div class="r" style="left:290px;top:620px;width:1518px;height:1px;background:#e9ebec;"></div>
<div class="r" style="left:290px;top:664.8px;width:1518px;height:1px;background:#e9ebec;"></div>
<div class="r" style="left:290px;top:727.3px;width:1518px;height:1px;background:#e9ebec;"></div>
<div class="r" style="left:290px;top:789.8px;width:1518px;height:1px;background:#e9ebec;"></div>
<div class="r" style="left:290px;top:852.3px;width:1518px;height:1px;background:#e9ebec;"></div>
<div class="r" style="left:290px;top:914.8px;width:1518px;height:1px;background:#e9ebec;"></div>
<div class="r" style="left:290px;top:977.3px;width:1518px;height:1px;background:#e9ebec;"></div>
<div class="r" style="left:290px;top:1039.8px;width:1518px;height:1px;background:#e9ebec;"></div>
<div class="r" style="left:290px;top:1102.3px;width:1518px;height:1px;background:#e9ebec;"></div>
<div class="r" style="left:290px;top:1164.8px;width:1518px;height:1px;background:#e9ebec;"></div>
<div class="r" style="left:290px;top:1227.3px;width:1518px;height:1px;background:#e9ebec;"></div>
<div class="r" style="left:290px;top:1289.8px;width:1518px;height:1px;background:#e9ebec;"></div>
<div class="r" style="left:289.5px;top:620px;width:1px;height:700px;background:#e9ebec;"></div>
<div class="r" style="left:397.8px;top:620px;width:1px;height:700px;background:#e9ebec;"></div>
<div class="r" style="left:472.0px;top:620px;width:1px;height:700px;background:#e9ebec;"></div>
<div class="r" style="left:631.9px;top:620px;width:1px;height:700px;background:#e9ebec;"></div>
<div class="r" style="left:770.9px;top:620px;width:1px;height:700px;background:#e9ebec;"></div>
<div class="r" style="left:910.7px;top:620px;width:1px;height:700px;background:#e9ebec;"></div>
<div class="r" style="left:1113.9px;top:620px;width:1px;height:700px;background:#e9ebec;"></div>
<div class="r" style="left:1237.9px;top:620px;width:1px;height:700px;background:#e9ebec;"></div>
<div class="r" style="left:1359.7px;top:620px;width:1px;height:700px;background:#e9ebec;"></div>
<div class="r" style="left:1473.8px;top:620px;width:1px;height:700px;background:#e9ebec;"></div>
<div class="r" style="left:1677.8px;top:620px;width:1px;height:700px;background:#e9ebec;"></div>
<div class="r" style="left:1807.1px;top:620px;width:1px;height:700px;background:#e9ebec;"></div>
<div class="t " style="top:635.75px;font-size:14px;line-height:14px;color:#212529;font-weight:700;letter-spacing:-0.05px;left:301px;">Tarih</div>
<svg style="left:374.5px;top:635px" width="7" height="16" viewBox="0 0 7 16"><path d="M0 7L3.5 0L7 7Z" fill="#e1e3e3"/><path d="M0 9H7L3.5 15.8Z" fill="#e1e3e3"/></svg>
<div class="t " style="top:635.75px;font-size:14px;line-height:14px;color:#212529;font-weight:700;letter-spacing:0.15px;left:409.3px;">Saat</div>
<svg style="left:449.5px;top:635px" width="7" height="16" viewBox="0 0 7 16"><path d="M0 7L3.5 0L7 7Z" fill="#e1e3e3"/><path d="M0 9H7L3.5 15.8Z" fill="#e1e3e3"/></svg>
<div class="t " style="top:635.75px;font-size:14px;line-height:14px;color:#212529;font-weight:700;letter-spacing:-0.168px;left:483.5px;">Fiş Yazdırma</div>
<svg style="left:609.4px;top:635px" width="7" height="16" viewBox="0 0 7 16"><path d="M0 7L3.5 0L7 7Z" fill="#6c6f75"/><path d="M0 9H7L3.5 15.8Z" fill="#e1e3e3"/></svg>
<div class="t " style="top:635.75px;font-size:14px;line-height:14px;color:#212529;font-weight:700;letter-spacing:-0.306px;left:643.4px;">Adı Soyadı</div>
<svg style="left:748px;top:635px" width="7" height="16" viewBox="0 0 7 16"><path d="M0 7L3.5 0L7 7Z" fill="#e1e3e3"/><path d="M0 9H7L3.5 15.8Z" fill="#e1e3e3"/></svg>
<div class="t " style="top:635.75px;font-size:14px;line-height:14px;color:#212529;font-weight:700;letter-spacing:0.158px;left:782.4px;">Mahalle</div>
<svg style="left:887.5px;top:635px" width="7" height="16" viewBox="0 0 7 16"><path d="M0 7L3.5 0L7 7Z" fill="#e1e3e3"/><path d="M0 9H7L3.5 15.8Z" fill="#e1e3e3"/></svg>
<div class="t " style="top:635.75px;font-size:14px;line-height:14px;color:#212529;font-weight:700;transform:scaleX(0.9220);transform-origin:left center;left:922.2px;">Şoför</div>
<svg style="left:1091.5px;top:635px" width="7" height="16" viewBox="0 0 7 16"><path d="M0 7L3.5 0L7 7Z" fill="#e1e3e3"/><path d="M0 9H7L3.5 15.8Z" fill="#e1e3e3"/></svg>
<div class="t " style="top:635.75px;font-size:14px;line-height:14px;color:#212529;font-weight:700;letter-spacing:-0.31px;left:1125.4px;">Zeytin Türü</div>
<svg style="left:1215.5px;top:635px" width="7" height="16" viewBox="0 0 7 16"><path d="M0 7L3.5 0L7 7Z" fill="#e1e3e3"/><path d="M0 9H7L3.5 15.8Z" fill="#e1e3e3"/></svg>
<div class="t " style="top:635.75px;font-size:14px;line-height:14px;color:#212529;font-weight:700;letter-spacing:-0.195px;right:511.5999999999999px;">Zeytin (KG)</div>
<svg style="left:1337px;top:635px" width="7" height="16" viewBox="0 0 7 16"><path d="M0 7L3.5 0L7 7Z" fill="#e1e3e3"/><path d="M0 9H7L3.5 15.8Z" fill="#e1e3e3"/></svg>
<div class="t " style="top:635.75px;font-size:14px;line-height:14px;color:#212529;font-weight:700;letter-spacing:0.144px;left:1375.5px;">Çıkan Yağ</div>
<svg style="left:1450.5px;top:635px" width="7" height="16" viewBox="0 0 7 16"><path d="M0 7L3.5 0L7 7Z" fill="#e1e3e3"/><path d="M0 9H7L3.5 15.8Z" fill="#e1e3e3"/></svg>
<div class="t " style="top:635.75px;font-size:14px;line-height:14px;color:#212529;font-weight:700;letter-spacing:0.282px;left:1494.5px;">Ödeme Tutarı(Toplam)</div>
<svg style="left:1656.2px;top:635px" width="7" height="16" viewBox="0 0 7 16"><path d="M0 7L3.5 0L7 7Z" fill="#e1e3e3"/><path d="M0 9H7L3.5 15.8Z" fill="#e1e3e3"/></svg>
<div class="t " style="top:635.75px;font-size:14px;line-height:14px;color:#212529;font-weight:700;letter-spacing:-0.161px;left:1689.3px;">Ödeme Türü</div>
<svg style="left:1784px;top:635px" width="7" height="16" viewBox="0 0 7 16"><path d="M0 7L3.5 0L7 7Z" fill="#e1e3e3"/><path d="M0 9H7L3.5 15.8Z" fill="#e1e3e3"/></svg>
<div class="t " style="top:689.30px;font-size:14px;line-height:14px;color:#212529;transform:scaleX(0.9229);transform-origin:left center;left:300.5px;">12 Ekim 2024</div>
<div class="t " style="top:689.30px;font-size:14px;line-height:14px;color:#212529;transform:scaleX(0.6765);transform-origin:left center;left:408.3px;">11:14</div>
<div class="r" style="left:483px;top:678.00px;width:131px;height:36.7px;background:#299cdb;border-radius:4px;"></div>
<div class="t " style="top:689.30px;font-size:14px;line-height:14px;color:#ffffff;letter-spacing:-0.087px;left:249.20000000000005px;width:600px;text-align:center;-webkit-text-stroke:0.3px #ffffff;">Teslim Edim Fişi</div>
<div class="t " style="top:689.30px;font-size:14px;line-height:14px;color:#212529;letter-spacing:-0.064px;left:642.4px;">Hikmet Keser</div>
<div class="t " style="top:689.30px;font-size:14px;line-height:14px;color:#212529;transform:scaleX(0.7969);transform-origin:left center;left:781.4px;">MERKEZ</div>
<div class="t " style="top:689.30px;font-size:14px;line-height:14px;color:#212529;letter-spacing:0.172px;left:921.2px;">Fabrikaya Teslim Edilmiştir.</div>
<div class="t " style="top:689.30px;font-size:14px;line-height:14px;color:#212529;transform:scaleX(0.8845);transform-origin:left center;left:1124.4px;">AYVALIK</div>
<div class="t " style="top:689.30px;font-size:14px;line-height:14px;color:#212529;transform:scaleX(0.9679);transform-origin:right center;right:490.29999999999995px;">750</div>
<div class="t " style="top:689.30px;font-size:14px;line-height:14px;color:#212529;letter-spacing:0.225px;right:376.20000000000005px;">500</div>
<div class="t " style="top:689.30px;font-size:14px;line-height:14px;color:#212529;letter-spacing:0.45px;right:171.70000000000005px;">50</div>
<div class="r" style="left:1689px;top:690.30px;width:32px;height:16px;background:#0ab39c;border-radius:3px;"></div>
<div class="t" style="left:1689px;width:32px;text-align:center;top:692.90px;font-size:10px;line-height:10px;color:#fff;font-weight:700;letter-spacing:0.3px;">Hak</div>
<div class="t " style="top:751.80px;font-size:14px;line-height:14px;color:#212529;transform:scaleX(0.9229);transform-origin:left center;left:300.5px;">12 Ekim 2024</div>
<div class="t " style="top:751.80px;font-size:14px;line-height:14px;color:#212529;transform:scaleX(0.6765);transform-origin:left center;left:408.3px;">11:01</div>
<div class="r" style="left:483px;top:740.50px;width:131px;height:36.7px;background:#299cdb;border-radius:4px;"></div>
<div class="t " style="top:751.80px;font-size:14px;line-height:14px;color:#ffffff;letter-spacing:-0.087px;left:249.20000000000005px;width:600px;text-align:center;-webkit-text-stroke:0.3px #ffffff;">Teslim Edim Fişi</div>
<div class="t " style="top:751.80px;font-size:14px;line-height:14px;color:#212529;letter-spacing:-0.064px;left:642.4px;">Hikmet Keser</div>
<div class="t " style="top:751.80px;font-size:14px;line-height:14px;color:#212529;transform:scaleX(0.8530);transform-origin:left center;left:781.4px;">GÜVENDİK</div>
<div class="t " style="top:751.80px;font-size:14px;line-height:14px;color:#212529;letter-spacing:0.215px;left:921.2px;">İsmail Kaya</div>
<div class="t " style="top:751.80px;font-size:14px;line-height:14px;color:#212529;transform:scaleX(0.8845);transform-origin:left center;left:1124.4px;">AYVALIK</div>
<div class="t " style="top:751.80px;font-size:14px;line-height:14px;color:#212529;letter-spacing:-0.175px;right:490.29999999999995px;">600</div>
<div class="t " style="top:751.80px;font-size:14px;line-height:14px;color:#212529;letter-spacing:0.075px;right:376.20000000000005px;">560</div>
<div class="t " style="top:751.80px;font-size:14px;line-height:14px;color:#212529;transform:scaleX(0.9358);transform-origin:right center;right:171.70000000000005px;">67,2</div>
<div class="r" style="left:1689px;top:752.80px;width:32px;height:16px;background:#0ab39c;border-radius:3px;"></div>
<div class="t" style="left:1689px;width:32px;text-align:center;top:755.40px;font-size:10px;line-height:10px;color:#fff;font-weight:700;letter-spacing:0.3px;">Hak</div>
<div class="t " style="top:814.30px;font-size:14px;line-height:14px;color:#212529;letter-spacing:-0.236px;left:300.5px;">07 Ekim 2024</div>
<div class="t " style="top:814.30px;font-size:14px;line-height:14px;color:#212529;transform:scaleX(0.7353);transform-origin:left center;left:408.3px;">11:09</div>
<div class="r" style="left:483px;top:803.00px;width:131px;height:36.7px;background:#299cdb;border-radius:4px;"></div>
<div class="t " style="top:814.30px;font-size:14px;line-height:14px;color:#ffffff;letter-spacing:-0.087px;left:249.20000000000005px;width:600px;text-align:center;-webkit-text-stroke:0.3px #ffffff;">Teslim Edim Fişi</div>
<div class="t " style="top:814.30px;font-size:14px;line-height:14px;color:#212529;letter-spacing:0.277px;left:642.4px;">Süleyman Doğan</div>
<div class="t " style="top:814.30px;font-size:14px;line-height:14px;color:#212529;left:781.4px;"></div>
<div class="t " style="top:814.30px;font-size:14px;line-height:14px;color:#212529;letter-spacing:0.172px;left:921.2px;">Fabrikaya Teslim Edilmiştir.</div>
<div class="t " style="top:814.30px;font-size:14px;line-height:14px;color:#212529;transform:scaleX(0.8845);transform-origin:left center;left:1124.4px;">AYVALIK</div>
<div class="t " style="top:814.30px;font-size:14px;line-height:14px;color:#212529;letter-spacing:-0.175px;right:490.29999999999995px;">600</div>
<div class="t " style="top:814.30px;font-size:14px;line-height:14px;color:#212529;letter-spacing:0.075px;right:376.20000000000005px;">507</div>
<div class="t " style="top:814.30px;font-size:14px;line-height:14px;color:#212529;transform:scaleX(0.9358);transform-origin:right center;right:171.70000000000005px;">50,7</div>
<div class="r" style="left:1689px;top:815.30px;width:32px;height:16px;background:#0ab39c;border-radius:3px;"></div>
<div class="t" style="left:1689px;width:32px;text-align:center;top:817.90px;font-size:10px;line-height:10px;color:#fff;font-weight:700;letter-spacing:0.3px;">Hak</div>
<div class="t " style="top:876.80px;font-size:14px;line-height:14px;color:#212529;letter-spacing:-0.262px;left:300.5px;">23 Eylül 2024</div>
<div class="t " style="top:876.80px;font-size:14px;line-height:14px;color:#212529;transform:scaleX(0.8274);transform-origin:left center;left:408.3px;">17:59</div>
<div class="r" style="left:483px;top:865.50px;width:131px;height:36.7px;background:#299cdb;border-radius:4px;"></div>
<div class="t " style="top:876.80px;font-size:14px;line-height:14px;color:#ffffff;letter-spacing:-0.087px;left:249.20000000000005px;width:600px;text-align:center;-webkit-text-stroke:0.3px #ffffff;">Teslim Edim Fişi</div>
<div class="t " style="top:876.80px;font-size:14px;line-height:14px;color:#212529;letter-spacing:0.277px;left:642.4px;">Süleyman Doğan</div>
<div class="t " style="top:876.80px;font-size:14px;line-height:14px;color:#212529;letter-spacing:0.308px;left:781.4px;">Çanakçı</div>
<div class="t " style="top:876.80px;font-size:14px;line-height:14px;color:#212529;letter-spacing:0.172px;left:921.2px;">Fabrikaya Teslim Edilmiştir.</div>
<div class="t " style="top:876.80px;font-size:14px;line-height:14px;color:#212529;transform:scaleX(0.9293);transform-origin:left center;left:1124.4px;">DOMAT</div>
<div class="t " style="top:876.80px;font-size:14px;line-height:14px;color:#212529;letter-spacing:0.225px;right:490.29999999999995px;">500</div>
<div class="t " style="top:876.80px;font-size:14px;line-height:14px;color:#212529;letter-spacing:0.075px;right:376.20000000000005px;">507</div>
<div class="t " style="top:876.80px;font-size:14px;line-height:14px;color:#212529;transform:scaleX(0.9358);transform-origin:right center;right:171.70000000000005px;">50,7</div>
<div class="r" style="left:1689px;top:877.80px;width:32px;height:16px;background:#0ab39c;border-radius:3px;"></div>
<div class="t" style="left:1689px;width:32px;text-align:center;top:880.40px;font-size:10px;line-height:10px;color:#fff;font-weight:700;letter-spacing:0.3px;">Hak</div>
<div class="t " style="top:939.30px;font-size:14px;line-height:14px;color:#212529;letter-spacing:-0.236px;left:300.5px;">07 Ekim 2024</div>
<div class="t " style="top:939.30px;font-size:14px;line-height:14px;color:#212529;transform:scaleX(0.8559);transform-origin:left center;left:408.3px;">10:44</div>
<div class="r" style="left:483px;top:928.00px;width:131px;height:36.7px;background:#299cdb;border-radius:4px;"></div>
<div class="t " style="top:939.30px;font-size:14px;line-height:14px;color:#ffffff;letter-spacing:-0.087px;left:249.20000000000005px;width:600px;text-align:center;-webkit-text-stroke:0.3px #ffffff;">Teslim Edim Fişi</div>
<div class="t " style="top:939.30px;font-size:14px;line-height:14px;color:#212529;letter-spacing:0.277px;left:642.4px;">Süleyman Doğan</div>
<div class="t " style="top:939.30px;font-size:14px;line-height:14px;color:#212529;letter-spacing:0.113px;left:781.4px;">Çıtak</div>
<div class="t " style="top:939.30px;font-size:14px;line-height:14px;color:#212529;letter-spacing:0.172px;left:921.2px;">Fabrikaya Teslim Edilmiştir.</div>
<div class="t " style="top:939.30px;font-size:14px;line-height:14px;color:#212529;transform:scaleX(0.8845);transform-origin:left center;left:1124.4px;">AYVALIK</div>
<div class="t " style="top:939.30px;font-size:14px;line-height:14px;color:#212529;letter-spacing:0.075px;right:490.29999999999995px;">900</div>
<div class="t " style="top:939.30px;font-size:14px;line-height:14px;color:#212529;letter-spacing:0.075px;right:376.20000000000005px;">507</div>
<div class="t " style="top:939.30px;font-size:14px;line-height:14px;color:#212529;transform:scaleX(0.9358);transform-origin:right center;right:171.70000000000005px;">50,7</div>
<div class="r" style="left:1689px;top:940.30px;width:32px;height:16px;background:#0ab39c;border-radius:3px;"></div>
<div class="t" style="left:1689px;width:32px;text-align:center;top:942.90px;font-size:10px;line-height:10px;color:#fff;font-weight:700;letter-spacing:0.3px;">Hak</div>
<div class="t " style="top:1001.80px;font-size:14px;line-height:14px;color:#212529;letter-spacing:-0.236px;left:300.5px;">07 Ekim 2024</div>
<div class="t " style="top:1001.80px;font-size:14px;line-height:14px;color:#212529;transform:scaleX(0.8559);transform-origin:left center;left:408.3px;">10:40</div>
<div class="r" style="left:483px;top:990.50px;width:131px;height:36.7px;background:#299cdb;border-radius:4px;"></div>
<div class="t " style="top:1001.80px;font-size:14px;line-height:14px;color:#ffffff;letter-spacing:-0.087px;left:249.20000000000005px;width:600px;text-align:center;-webkit-text-stroke:0.3px #ffffff;">Teslim Edim Fişi</div>
<div class="t " style="top:1001.80px;font-size:14px;line-height:14px;color:#212529;letter-spacing:0.277px;left:642.4px;">Süleyman Doğan</div>
<div class="t " style="top:1001.80px;font-size:14px;line-height:14px;color:#212529;letter-spacing:0.308px;left:781.4px;">Çanakçı</div>
<div class="t " style="top:1001.80px;font-size:14px;line-height:14px;color:#212529;letter-spacing:0.172px;left:921.2px;">Fabrikaya Teslim Edilmiştir.</div>
<div class="t " style="top:1001.80px;font-size:14px;line-height:14px;color:#212529;transform:scaleX(0.8845);transform-origin:left center;left:1124.4px;">AYVALIK</div>
<div class="t " style="top:1001.80px;font-size:14px;line-height:14px;color:#212529;letter-spacing:0.075px;right:490.29999999999995px;">900</div>
<div class="t " style="top:1001.80px;font-size:14px;line-height:14px;color:#212529;letter-spacing:0.075px;right:376.20000000000005px;">507</div>
<div class="t " style="top:1001.80px;font-size:14px;line-height:14px;color:#212529;transform:scaleX(0.9358);transform-origin:right center;right:171.70000000000005px;">50,7</div>
<div class="r" style="left:1689px;top:1002.80px;width:32px;height:16px;background:#0ab39c;border-radius:3px;"></div>
<div class="t" style="left:1689px;width:32px;text-align:center;top:1005.40px;font-size:10px;line-height:10px;color:#fff;font-weight:700;letter-spacing:0.3px;">Hak</div>
<div class="t " style="top:1064.30px;font-size:14px;line-height:14px;color:#212529;letter-spacing:-0.236px;left:300.5px;">07 Ekim 2024</div>
<div class="t " style="top:1064.30px;font-size:14px;line-height:14px;color:#212529;transform:scaleX(0.8730);transform-origin:left center;left:408.3px;">10:32</div>
<div class="r" style="left:483px;top:1053.00px;width:131px;height:36.7px;background:#299cdb;border-radius:4px;"></div>
<div class="t " style="top:1064.30px;font-size:14px;line-height:14px;color:#ffffff;letter-spacing:-0.087px;left:249.20000000000005px;width:600px;text-align:center;-webkit-text-stroke:0.3px #ffffff;">Teslim Edim Fişi</div>
<div class="t " style="top:1064.30px;font-size:14px;line-height:14px;color:#212529;letter-spacing:0.277px;left:642.4px;">Süleyman Doğan</div>
<div class="t " style="top:1064.30px;font-size:14px;line-height:14px;color:#212529;letter-spacing:0.76px;left:781.4px;">Çamönü</div>
<div class="t " style="top:1064.30px;font-size:14px;line-height:14px;color:#212529;letter-spacing:0.172px;left:921.2px;">Fabrikaya Teslim Edilmiştir.</div>
<div class="t " style="top:1064.30px;font-size:14px;line-height:14px;color:#212529;transform:scaleX(0.8845);transform-origin:left center;left:1124.4px;">AYVALIK</div>
<div class="t " style="top:1064.30px;font-size:14px;line-height:14px;color:#212529;letter-spacing:0.075px;right:490.29999999999995px;">900</div>
<div class="t " style="top:1064.30px;font-size:14px;line-height:14px;color:#212529;letter-spacing:0.075px;right:376.20000000000005px;">507</div>
<div class="t " style="top:1064.30px;font-size:14px;line-height:14px;color:#212529;transform:scaleX(0.9358);transform-origin:right center;right:171.70000000000005px;">50,7</div>
<div class="r" style="left:1689px;top:1065.30px;width:32px;height:16px;background:#0ab39c;border-radius:3px;"></div>
<div class="t" style="left:1689px;width:32px;text-align:center;top:1067.90px;font-size:10px;line-height:10px;color:#fff;font-weight:700;letter-spacing:0.3px;">Hak</div>
<div class="t " style="top:1126.80px;font-size:14px;line-height:14px;color:#212529;letter-spacing:-0.236px;left:300.5px;">07 Ekim 2024</div>
<div class="t " style="top:1126.80px;font-size:14px;line-height:14px;color:#212529;transform:scaleX(0.7703);transform-origin:left center;left:408.3px;">10:31</div>
<div class="r" style="left:483px;top:1115.50px;width:131px;height:36.7px;background:#299cdb;border-radius:4px;"></div>
<div class="t " style="top:1126.80px;font-size:14px;line-height:14px;color:#ffffff;letter-spacing:-0.087px;left:249.20000000000005px;width:600px;text-align:center;-webkit-text-stroke:0.3px #ffffff;">Teslim Edim Fişi</div>
<div class="t " style="top:1126.80px;font-size:14px;line-height:14px;color:#212529;letter-spacing:0.277px;left:642.4px;">Süleyman Doğan</div>
<div class="t " style="top:1126.80px;font-size:14px;line-height:14px;color:#212529;letter-spacing:0.113px;left:781.4px;">Çıtak</div>
<div class="t " style="top:1126.80px;font-size:14px;line-height:14px;color:#212529;letter-spacing:0.172px;left:921.2px;">Fabrikaya Teslim Edilmiştir.</div>
<div class="t " style="top:1126.80px;font-size:14px;line-height:14px;color:#212529;transform:scaleX(0.8845);transform-origin:left center;left:1124.4px;">AYVALIK</div>
<div class="t " style="top:1126.80px;font-size:14px;line-height:14px;color:#212529;letter-spacing:0.225px;right:490.29999999999995px;">500</div>
<div class="t " style="top:1126.80px;font-size:14px;line-height:14px;color:#212529;letter-spacing:0.075px;right:376.20000000000005px;">507</div>
<div class="t " style="top:1126.80px;font-size:14px;line-height:14px;color:#212529;transform:scaleX(0.9358);transform-origin:right center;right:171.70000000000005px;">50,7</div>
<div class="r" style="left:1689px;top:1127.80px;width:32px;height:16px;background:#0ab39c;border-radius:3px;"></div>
<div class="t" style="left:1689px;width:32px;text-align:center;top:1130.40px;font-size:10px;line-height:10px;color:#fff;font-weight:700;letter-spacing:0.3px;">Hak</div>
<div class="t " style="top:1189.30px;font-size:14px;line-height:14px;color:#212529;letter-spacing:-0.236px;left:300.5px;">07 Ekim 2024</div>
<div class="t " style="top:1189.30px;font-size:14px;line-height:14px;color:#212529;transform:scaleX(0.8730);transform-origin:left center;left:408.3px;">10:29</div>
<div class="r" style="left:483px;top:1178.00px;width:131px;height:36.7px;background:#299cdb;border-radius:4px;"></div>
<div class="t " style="top:1189.30px;font-size:14px;line-height:14px;color:#ffffff;letter-spacing:-0.087px;left:249.20000000000005px;width:600px;text-align:center;-webkit-text-stroke:0.3px #ffffff;">Teslim Edim Fişi</div>
<div class="t " style="top:1189.30px;font-size:14px;line-height:14px;color:#212529;letter-spacing:0.277px;left:642.4px;">Süleyman Doğan</div>
<div class="t " style="top:1189.30px;font-size:14px;line-height:14px;color:#212529;letter-spacing:0.308px;left:781.4px;">Çanakçı</div>
<div class="t " style="top:1189.30px;font-size:14px;line-height:14px;color:#212529;letter-spacing:0.172px;left:921.2px;">Fabrikaya Teslim Edilmiştir.</div>
<div class="t " style="top:1189.30px;font-size:14px;line-height:14px;color:#212529;transform:scaleX(0.8845);transform-origin:left center;left:1124.4px;">AYVALIK</div>
<div class="t " style="top:1189.30px;font-size:14px;line-height:14px;color:#212529;letter-spacing:0.075px;right:490.29999999999995px;">900</div>
<div class="t " style="top:1189.30px;font-size:14px;line-height:14px;color:#212529;letter-spacing:0.075px;right:376.20000000000005px;">507</div>
<div class="t " style="top:1189.30px;font-size:14px;line-height:14px;color:#212529;transform:scaleX(0.9358);transform-origin:right center;right:171.70000000000005px;">50,7</div>
<div class="r" style="left:1689px;top:1190.30px;width:32px;height:16px;background:#0ab39c;border-radius:3px;"></div>
<div class="t" style="left:1689px;width:32px;text-align:center;top:1192.90px;font-size:10px;line-height:10px;color:#fff;font-weight:700;letter-spacing:0.3px;">Hak</div>
<div class="t " style="top:1251.80px;font-size:14px;line-height:14px;color:#212529;letter-spacing:-0.236px;left:300.5px;">07 Ekim 2024</div>
<div class="t " style="top:1251.80px;font-size:14px;line-height:14px;color:#212529;transform:scaleX(0.8730);transform-origin:left center;left:408.3px;">10:25</div>
<div class="r" style="left:483px;top:1240.50px;width:131px;height:36.7px;background:#299cdb;border-radius:4px;"></div>
<div class="t " style="top:1251.80px;font-size:14px;line-height:14px;color:#ffffff;letter-spacing:-0.087px;left:249.20000000000005px;width:600px;text-align:center;-webkit-text-stroke:0.3px #ffffff;">Teslim Edim Fişi</div>
<div class="t " style="top:1251.80px;font-size:14px;line-height:14px;color:#212529;letter-spacing:0.277px;left:642.4px;">Süleyman Doğan</div>
<div class="t " style="top:1251.80px;font-size:14px;line-height:14px;color:#212529;letter-spacing:0.76px;left:781.4px;">Çamönü</div>
<div class="t " style="top:1251.80px;font-size:14px;line-height:14px;color:#212529;letter-spacing:0.172px;left:921.2px;">Fabrikaya Teslim Edilmiştir.</div>
<div class="t " style="top:1251.80px;font-size:14px;line-height:14px;color:#212529;transform:scaleX(0.9293);transform-origin:left center;left:1124.4px;">DOMAT</div>
<div class="t " style="top:1251.80px;font-size:14px;line-height:14px;color:#212529;letter-spacing:0.225px;right:490.29999999999995px;">500</div>
<div class="t " style="top:1251.80px;font-size:14px;line-height:14px;color:#212529;letter-spacing:0.075px;right:376.20000000000005px;">507</div>
<div class="t " style="top:1251.80px;font-size:14px;line-height:14px;color:#212529;transform:scaleX(0.9358);transform-origin:right center;right:171.70000000000005px;">50,7</div>
<div class="r" style="left:1689px;top:1252.80px;width:32px;height:16px;background:#0ab39c;border-radius:3px;"></div>
<div class="t" style="left:1689px;width:32px;text-align:center;top:1255.40px;font-size:10px;line-height:10px;color:#fff;font-weight:700;letter-spacing:0.3px;">Hak</div></body></html>
